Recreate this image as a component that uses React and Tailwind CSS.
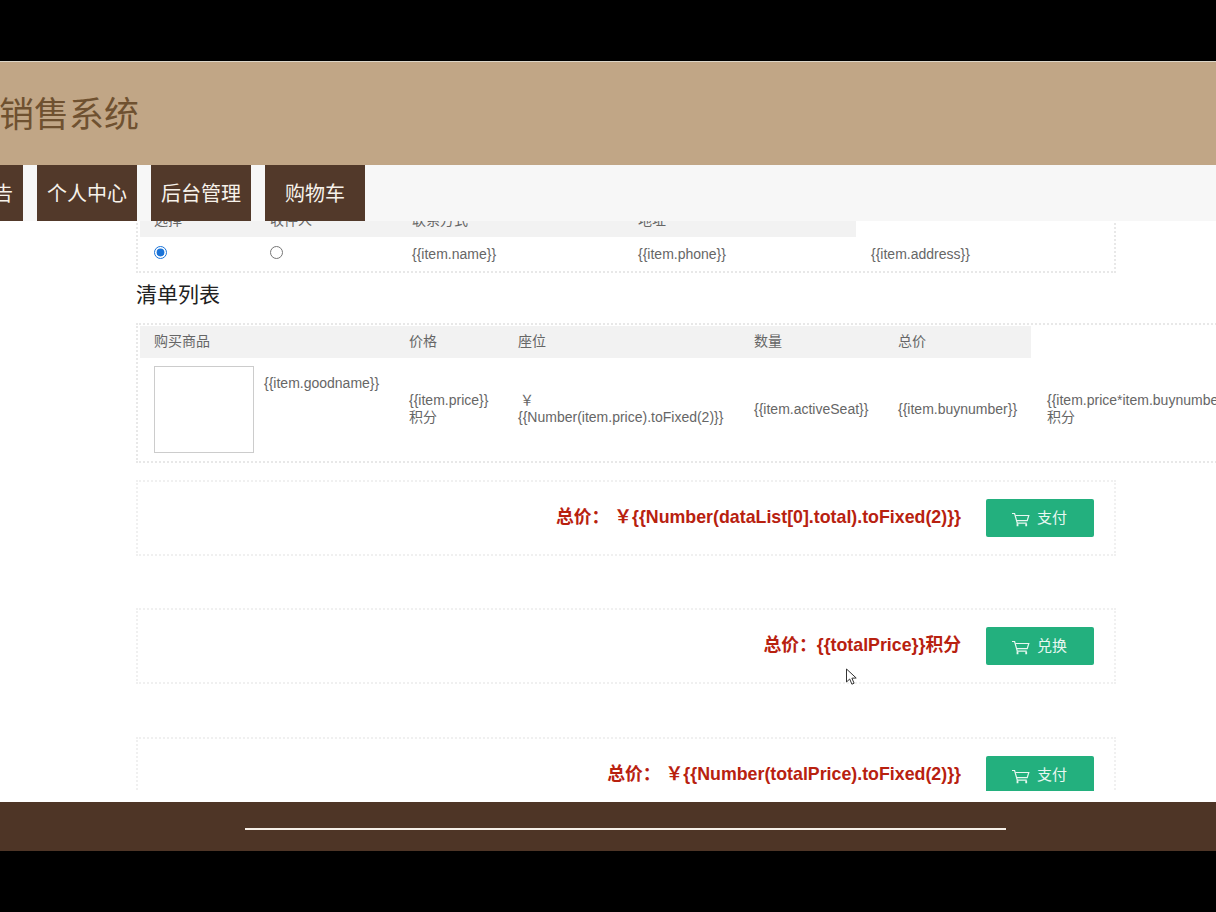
/**
 * Order confirmation page (template placeholders not yet rendered)
 */

const cellFont = { fontFamily: '"Liberation Sans", "Noto Sans CJK SC", sans-serif' };

function CartIcon() {
    return (
        <svg width="19" height="16" viewBox="0 0 19 16" fill="none" stroke="currentColor" strokeWidth="1.2" className="shrink-0 mt-[3px]">
            <path d="M1 1.5h2.6l2.7 9.6h9.4" />
            <path d="M4.2 3.5h13.6l-1.6 5.2H5.8" />
            <path d="M6.5 11.5v2.8M15.2 11.5v2.8" strokeWidth="1.8" />
        </svg>
    );
}

function TotalBox({ label, button, className }) {
    return (
        <div className={`w-[980px] h-[76px] shrink-0 border-2 border-dotted border-[#f0f0f0] flex items-center justify-end pr-[20px] ${className}`}>
            <span className="text-[17.8px] font-bold text-[#b8210f] mr-[25px] -mt-[2px]">{label}</span>
            <button className="w-[108px] h-[38px] shrink-0 rounded-[2px] bg-[#23b07e] text-[#e8f7f1] text-[15px] pr-[2px] flex items-center justify-center gap-[7px]">
                <CartIcon />
                {button}
            </button>
        </div>
    );
}

export default function App() {
    return (
        <div style={cellFont} className="relative w-[1216px] h-[912px] bg-black overflow-hidden flex flex-col">
            <div className="h-[61px] shrink-0" />

            {/* Header */}
            <div className="h-[104px] shrink-0 bg-[#c1a686] border-t border-[#ddd6c8] flex items-center">
                <h1 className="text-[35px] leading-none font-normal text-[#6f5130] whitespace-nowrap -ml-px mt-[1px]">销售系统</h1>
            </div>

            {/* Nav */}
            <div className="h-[56px] shrink-0 bg-[#f7f7f7] relative z-10 flex gap-[14px] -mb-px">
                {['系统公告', '个人中心', '后台管理', '购物车'].map((t, i) => (
                    <div key={t} className={`w-[100px] h-[56px] pt-[2px] shrink-0 bg-[#52392a] text-[#f7f2ea] text-[20px] flex items-center justify-center ${i === 0 ? '-ml-[77px]' : ''}`}>
                        {t}
                    </div>
                ))}
            </div>

            {/* Content */}
            <div className="h-[582px] shrink-0 bg-white pb-[11px]">
                <div className="h-full overflow-hidden pl-[136px] flex flex-col items-start text-[14px] text-[#666666]">
                    {/* Address table */}
                    <div className="w-[980px] shrink-0 -mt-[17px] border-2 border-dotted border-[#e8e8e8] pl-[2px]">
                        <div className="flex w-fit h-[32px] pb-[2px] items-center bg-[#f2f2f2]">
                            <div className="w-[116px] pl-[14px]">选择</div>
                            <div className="w-[142px] pl-[14px]">收件人</div>
                            <div className="w-[226px] pl-[14px]">联系方式</div>
                            <div className="w-[232px] pl-[14px]">地址</div>
                        </div>
                        <div className="flex h-[34px] items-center">
                            <div className="w-[116px] pl-[14px] flex -mt-[3px]"><input type="radio" name="a" defaultChecked className="m-0 w-[13px] h-[13px] accent-[#1a73d8]" /></div>
                            <div className="w-[142px] pl-[14px] flex -mt-[3px]"><input type="radio" name="b" className="m-0 w-[13px] h-[13px]" /></div>
                            <div className="w-[226px] pl-[14px]">{'{{item.name}}'}</div>
                            <div className="w-[233px] pl-[14px]">{'{{item.phone}}'}</div>
                            <div className="pl-[14px]">{'{{item.address}}'}</div>
                        </div>
                    </div>

                    <div className="h-[50px] shrink-0 text-[21px] leading-[44px] text-[#222222]">清单列表</div>

                    {/* Goods table */}
                    <div className="w-[1200px] shrink-0 border-2 border-dotted border-[#e8e8e8] pl-[2px] pt-px">
                        <div className="flex w-fit h-[32px] pb-[2px] items-center bg-[#f2f2f2]">
                            <div className="w-[255px] pl-[14px]">购买商品</div>
                            <div className="w-[109px] pl-[14px]">价格</div>
                            <div className="w-[236px] pl-[14px]">座位</div>
                            <div className="w-[144px] pl-[14px]">数量</div>
                            <div className="w-[147px] pl-[14px]">总价</div>
                        </div>
                        <div className="flex h-[103px] items-center leading-[17px]">
                            <div className="w-[255px] pl-[14px] flex items-start gap-[10px]">
                                <div className="w-[100px] h-[87px] shrink-0 border border-[#cccccc]" />
                                <div className="mt-[9px]">{'{{item.goodname}}'}</div>
                            </div>
                            <div className="w-[109px] pl-[14px] pb-[2px]">{'{{item.price}}'}<br />积分</div>
                            <div className="w-[236px] pl-[14px] pb-[2px]"><span className="pl-[2px]">￥</span><br />{'{{Number(item.price).toFixed(2)}}'}</div>
                            <div className="w-[144px] pl-[14px]">{'{{item.activeSeat}}'}</div>
                            <div className="w-[149px] pl-[14px]">{'{{item.buynumber}}'}</div>
                            <div className="pl-[14px] pb-[2px] whitespace-nowrap">{'{{item.price*item.buynumber}}'}<br />积分</div>
                        </div>
                    </div>

                    <TotalBox className="mt-[17px]" label="总价： ￥{{Number(dataList[0].total).toFixed(2)}}" button="支付" />
                    <TotalBox className="mt-[52px]" label="总价：{{totalPrice}}积分" button="兑换" />
                    <TotalBox className="mt-[53px]" label="总价： ￥{{Number(totalPrice).toFixed(2)}}" button="支付" />
                </div>
            </div>

            {/* Footer */}
            <div className="h-[49px] shrink-0 bg-[#4e3526] pt-[26px] pl-[245px]">
                <div className="w-[761px] h-[2px] bg-[#f5efe8]" />
            </div>

            {/* Mouse cursor */}
            <svg width="14" height="18" viewBox="0 0 14 18" className="absolute left-[845px] top-[668px] z-20">
                <path d="M1.5 1v13l3.2-3 2.2 5.2 2.2-1-2.2-5 4.3-.2z" fill="#fff" stroke="#333" strokeWidth="1" />
            </svg>
        </div>
    );
}
